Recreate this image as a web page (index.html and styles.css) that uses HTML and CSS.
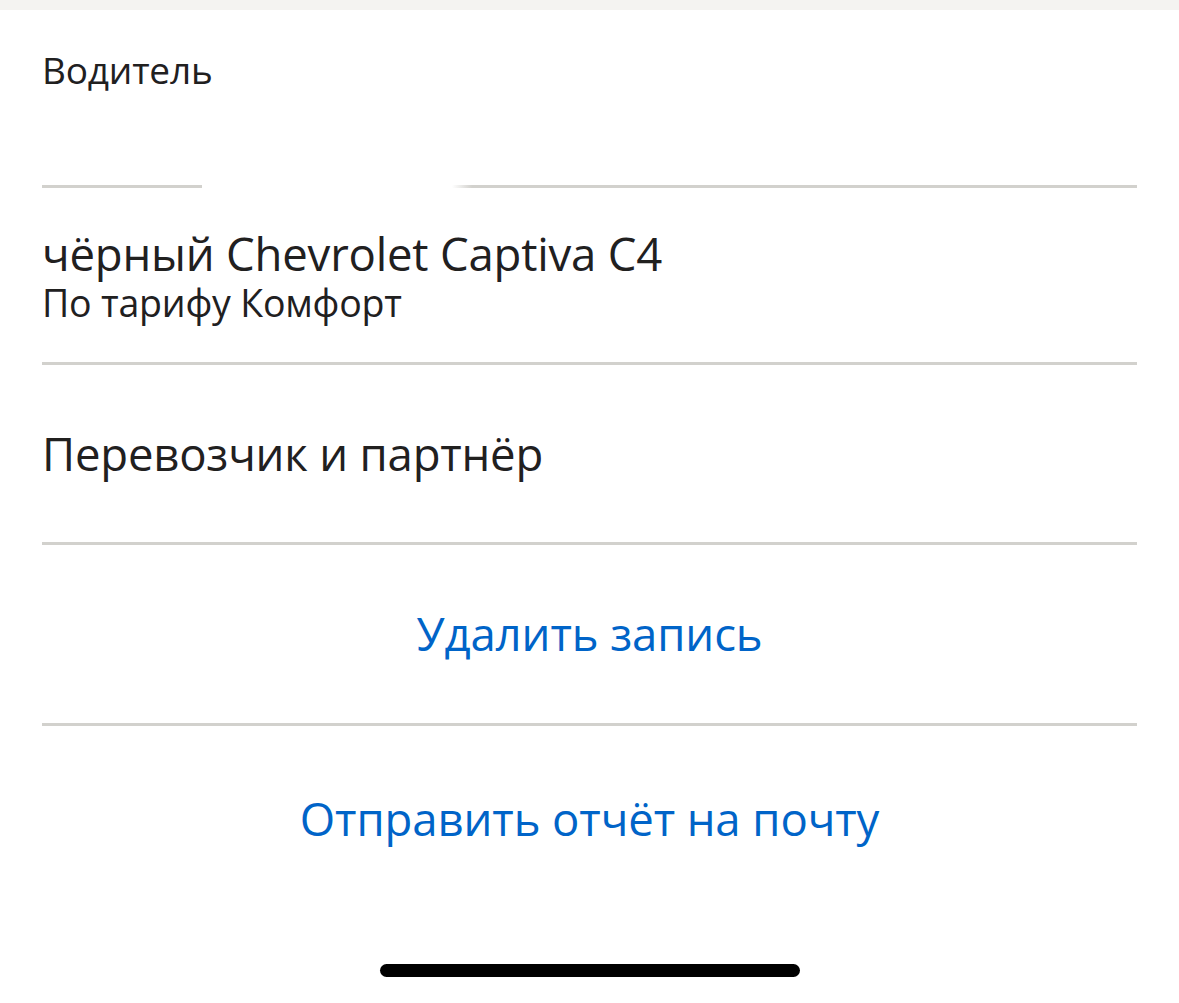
FILE: index.html
```html
<!DOCTYPE html>
<html lang="ru">
<head>
<meta charset="utf-8">
<title>Поездка</title>
<link rel="stylesheet" href="styles.css">
</head>
<body>
<div class="page">
  <div class="top-strip"></div>
  <div class="content">
    <section class="row row-driver">
      <div class="label">Водитель</div>
      <div class="name"></div>
    </section>
    <div class="divider divider-redacted"></div>
    <section class="row row-car">
      <div class="title">чёрный Chevrolet Captiva C4</div>
      <div class="sub">По тарифу Комфорт</div>
    </section>
    <div class="divider"></div>
    <section class="row row-partner">
      <div class="title">Перевозчик и партнёр</div>
    </section>
    <div class="divider"></div>
    <section class="row row-action">
      <a class="action">Удалить запись</a>
    </section>
    <div class="divider"></div>
    <section class="row row-action row-last">
      <a class="action">Отправить отчёт на почту</a>
    </section>
  </div>
  <div class="home-wrap"><div class="home-bar"></div></div>
</div>
</body>
</html>
```

FILE: styles.css
```css
* { box-sizing: border-box; }
html, body {
  margin: 0;
  padding: 0;
  background: #ffffff;
}
body {
  font-family: "Open Sans", "Noto Sans", sans-serif;
  color: #21201f;
}
.page {
  width: 1179px;
  height: 1003px;
  display: flex;
  flex-direction: column;
  overflow: hidden;
}
.top-strip {
  height: 10px;
  background: #f4f3f1;
}
.content {
  padding: 0 42px;
  display: flex;
  flex-direction: column;
}
.row {
  display: flex;
  flex-direction: column;
}
.divider {
  height: 3px;
  background: #d2d1cd;
}
.divider-redacted {
  background: linear-gradient(to right, #d2d1cd 0, #d2d1cd 160px, #ffffff 160px, #ffffff 410px, #d2d1cd 430px, #d2d1cd 100%);
}
.row-driver {
  padding: 40px 0 40px;
}
.label {
  font-size: 37px;
  line-height: 40px;
  letter-spacing: -0.2px;
}
.name {
  height: 50px;
  margin-top: 5px;
}
.row-car {
  padding: 39px 0 39px;
}
.title {
  font-size: 45.5px;
  line-height: 52px;
  letter-spacing: -0.2px;
}
.sub {
  font-size: 37.5px;
  line-height: 40px;
  margin-top: 4px;
  letter-spacing: -0.2px;
}
.row-partner {
  padding: 62px 0 63px;
}
.row-action {
  padding: 62px 0 64px;
  align-items: center;
}
.row-last {
  padding-top: 66px;
}
.action {
  font-size: 45.5px;
  line-height: 52px;
  color: #0064c8;
  letter-spacing: -0.1px;
}
.home-wrap {
  margin-top: auto;
  padding-bottom: 26px;
  display: flex;
  justify-content: center;
}
.home-bar {
  width: 420px;
  height: 13px;
  border-radius: 7px;
  background: #000000;
}
```
